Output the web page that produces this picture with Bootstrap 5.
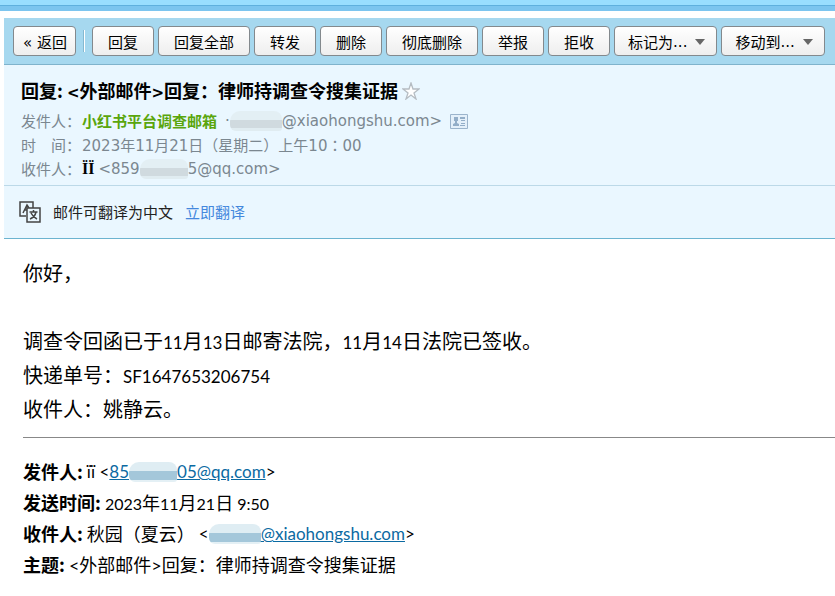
<!DOCTYPE html>
<html lang="zh-CN">
<head>
<meta charset="utf-8">
<meta name="viewport" content="width=device-width, initial-scale=1">
<title>回复: 律师持调查令搜集证据</title>
<link href="https://cdn.jsdelivr.net/npm/bootstrap@5.3.0/dist/css/bootstrap.min.css" rel="stylesheet">
<style>
body{font-family:"Noto Sans CJK SC",sans-serif;color:#000;background:#fff;overflow-x:hidden}
.topstrip{height:11px;background:linear-gradient(#99deff 0 5px,#5fb0de 5px 6px,#7cc5ef 6px)}
.mail{margin:7px 0 0 4px}
.lat{font-family:"DejaVu Sans","Noto Sans CJK SC",sans-serif}
.toolbar{background:#a6d8ef;border-bottom:1px solid #7fb3cc;padding:8px 9px;gap:4px}
.toolbar .btn{font-size:15px;line-height:20px;height:30px;padding:5px 15px 3px;border:1px solid #83898d;border-radius:4px;background:linear-gradient(#fff,#eee);color:#000;white-space:nowrap}
.toolbar .back{padding-left:9px;padding-right:8px}
.toolbar .drop{padding-left:13px;padding-right:11px}
.drop svg{margin-left:8px}
.split{width:2px;height:22px;background:linear-gradient(90deg,#85b9d1 50%,#fff 50%);margin:0 3px}
.heads{background:#eaf7ff;padding:13px 17px 4px;border-bottom:1px solid #bcd9e8;font-size:15px;line-height:24px;color:#7b8790}
.heads h1{font-size:18px;line-height:25px;font-weight:700;color:#000;margin:0 0 6px;white-space:pre}
.heads h1 .lat{font-size:15px;line-height:1}
.meta{height:24px;white-space:nowrap}
.meta dt{font-weight:400;width:61px}
.meta dd{margin:0}
.midcolon{font-family:"Noto Sans CJK TC",sans-serif}
.sender{color:#5aa60c;font-weight:700}
.nick{font-family:"Liberation Serif",serif;font-size:16px;font-weight:700;color:#000;margin-right:4px}
.smudge{display:inline-block;width:48px;height:20px;border-radius:10px 8px 3px 6px;background:linear-gradient(#e3eff4 45%,#d0dadf 45% 85%,#e0ecf1 85%)}
.smudge.wide{width:52px}
.translate{background:#eaf7ff;border-bottom:1px solid #6cb4d0;height:53px;padding:0 15px;font-size:15px;color:#222}
.translate a{color:#4488dd}
.content{padding:17px 0 12px 19px;font-size:20px;line-height:34px}
.content p{margin:0}
.num{font-family:Lato,"Noto Sans CJK SC",sans-serif;font-size:17px;line-height:1}
.content hr{margin:11px 0 0;border-top:1px solid #888;opacity:1}
.quote{font-size:18px;line-height:31px;padding-top:18px}
.quote .digits{font-size:16px}
.quote .angle{font-size:18px}
.quote a{color:#0b6aa2}
.quote .smudge{background:linear-gradient(#dfedf3 45%,#a4c7da 45% 90%,#e4f0f5 90%)}
</style>
<script src="https://cdn.jsdelivr.net/npm/bootstrap@5.3.0/dist/js/bootstrap.bundle.min.js"></script>
</head>
<body>
<div class="topstrip"></div>
<main class="mail">
<div class="toolbar d-flex align-items-center">
<button class="btn back" type="button"><span class="lat">« </span>返回</button><span class="split"></span>
<button class="btn" type="button">回复</button>
<button class="btn" type="button">回复全部</button>
<button class="btn" type="button">转发</button>
<button class="btn" type="button">删除</button>
<button class="btn" type="button">彻底删除</button>
<button class="btn" type="button">举报</button>
<button class="btn" type="button">拒收</button>
<button class="btn drop d-flex align-items-center" type="button">标记为<span class="lat">...</span><svg width="10" height="6"><path d="M0 0h10L5 6z" fill="#666"/></svg></button>
<button class="btn drop d-flex align-items-center" type="button">移动到<span class="lat">...</span><svg width="10" height="6"><path d="M0 0h10L5 6z" fill="#666"/></svg></button>
</div>
<header class="heads">
<h1 class="d-flex align-items-center"><span>回复: <span class="lat">&lt;</span>外部邮件<span class="lat">&gt;</span>回复：律师持调查令搜集证据</span><svg class="ms-1" width="18" height="18" viewBox="0 0 18 18"><path d="M9 1l2 6h6l-5 4 2 6-5-4-5 4 2-6-5-4h6z" fill="#fff" stroke="#b5bcc2" stroke-width="1.3"/></svg></h1>
<dl class="mb-0">
<div class="meta d-flex align-items-center"><dt>发件人：</dt><dd class="d-flex align-items-center"><span class="sender">小红书平台调查邮箱</span><span class="lat ms-2">·</span><span class="smudge wide"></span><span class="lat">@xiaohongshu.com&gt;</span>
<svg class="ms-2" width="18" height="15" viewBox="0 0 18 15"><path d="M.5.5h17v14H.5z" fill="#e4f0fa" stroke="#9bb4cc"/><path d="M4 3h4v4H7v2l2 1v2H3v-2l2-1V7H4zM10 3h5v2h-5zM11 6h4v1h-4zM11 9h4v1h-4zM10 11h5v1h-5z" fill="#93aec8"/></svg></dd></div>
<div class="meta d-flex"><dt>时　间：</dt><dd class="lat">2023年11月21日（星期二）上午10<span class="midcolon" lang="zh-Hant">：</span>00</dd></div>
<div class="meta d-flex"><dt>收件人：</dt><dd class="lat d-flex align-items-center"><span class="nick">ÏÏ</span>&lt;859<span class="smudge"></span>5@qq.com&gt;</dd></div>
</dl>
</header>
<div class="translate d-flex align-items-center">
<svg width="22" height="22" viewBox="0 0 22 22" fill="none" stroke="#444" stroke-width="1.5"><path d="M7 15H1V1h13v6"/><path d="M8 7h13v14H8zM4 12l4-8 2 3M5 9h3M10.500 11h8M14.500 9v2M17 11q-1 5-6 7M12 12q2 4 6 6"/></svg>
<span class="ms-2 ps-1">邮件可翻译为中文</span><a class="ms-2 ps-1 text-decoration-none" href="#">立即翻译</a>
</div>
<article class="content">
<p>你好，</p><p><br></p>
<p>调查令回函已于<span class="num">11</span>月<span class="num">13</span>日邮寄法院，<span class="num">11</span>月<span class="num">14</span>日法院已签收。</p>
<p>快递单号：<span class="num">SF1647653206754</span></p>
<p>收件人：姚静云。</p>
<hr>
<section class="quote">
<p class="d-flex align-items-center"><b>发件人:</b><span class="num ms-1">ïï &lt;</span><a class="num d-flex align-items-center" href="#">85<span class="smudge"></span>05@qq.com</a><span class="num">&gt;</span></p>
<p><b>发送时间:</b> <span class="num digits">2023</span>年<span class="num digits">11</span>月<span class="num digits">21</span>日<span class="num digits"> 9:50</span></p>
<p class="d-flex align-items-center"><b>收件人:</b><span class="ms-1">秋园（夏云）</span><span class="num ms-1">&lt;</span><a class="num d-flex align-items-center" href="#"><span class="smudge wide"></span>@xiaohongshu.com</a><span class="num">&gt;</span></p>
<p><b>主题:</b> <span class="num angle">&lt;</span>外部邮件<span class="num angle">&gt;</span>回复：律师持调查令搜集证据</p>
</section>
</article>
</main>
</body>
</html>
